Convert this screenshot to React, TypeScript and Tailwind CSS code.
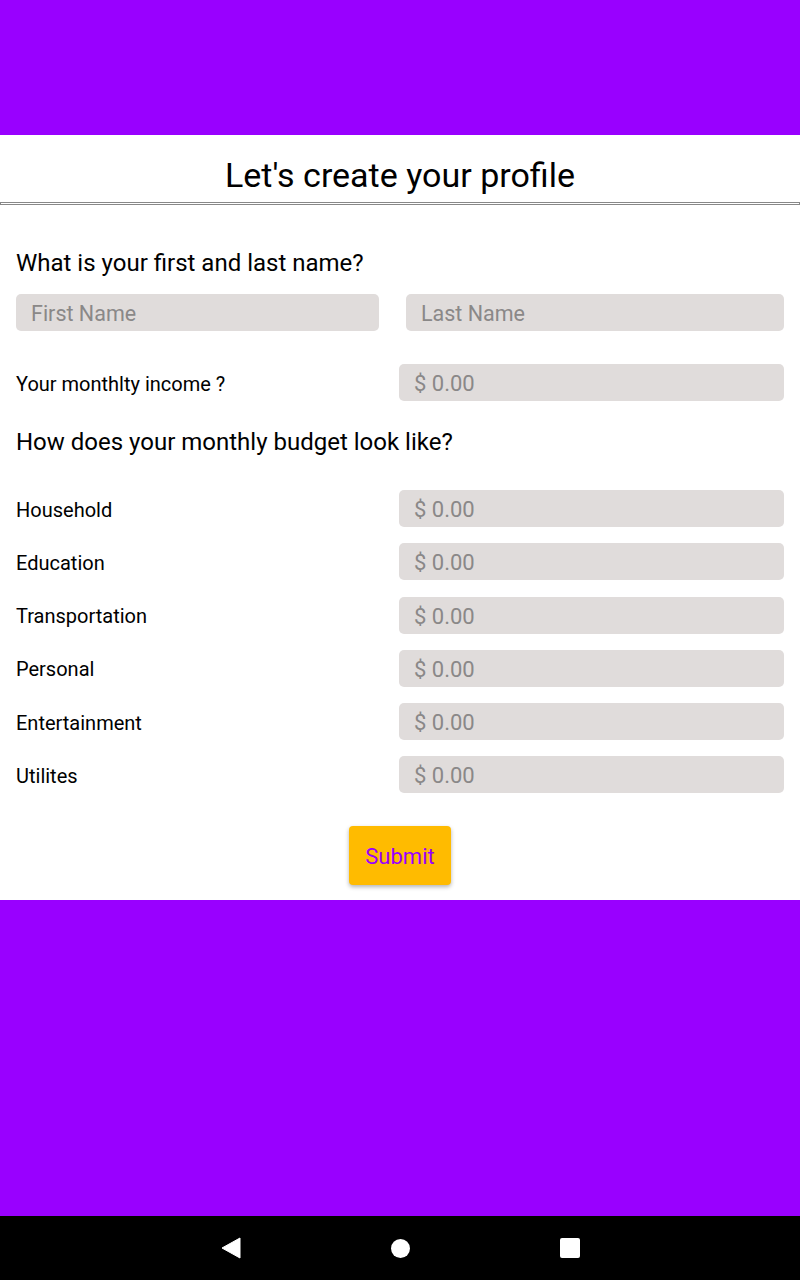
const rows = ["Household", "Education", "Transportation", "Personal", "Entertainment", "Utilites"];

const MoneyInput = () => (
  <input
    placeholder="$ 0.00"
    className="w-[385px] h-[37px] rounded-[5px] bg-[#e0dcdb] pl-[15px] pt-[2px] text-[22px] text-[#222] placeholder:text-[#8a8888] outline-none"
  />
);

export default function App() {
  return (
    <div className="w-[800px] h-[1280px] flex flex-col font-['Roboto',sans-serif] text-black">
      <div className="h-[135px] bg-[#9900ff]" />

      <div className="h-[765px] bg-white flex flex-col">
        <h1 className="h-[67px] pt-[18px] text-center text-[34px] leading-[44px]">Let's create your profile</h1>
        <div className="h-[3px] border border-[#888]" />

        <div className="px-4 pt-[43px]">
          <p className="text-[24px] leading-[30px]">What is your first and last name?</p>
          <div className="flex justify-between mt-[16px]">
            <input
              placeholder="First Name"
              className="w-[363px] h-[37px] rounded-[5px] bg-[#e0dcdb] pl-[15px] pt-[2px] text-[21.5px] placeholder:text-[#8a8888] outline-none"
            />
            <input
              placeholder="Last Name"
              className="w-[378px] h-[37px] rounded-[5px] bg-[#e0dcdb] pl-[15px] pt-[2px] text-[21.5px] placeholder:text-[#8a8888] outline-none"
            />
          </div>

          <div className="flex items-center justify-between mt-[33px]">
            <span className="text-[20px] pt-[2px]">Your monthlty income ?</span>
            <MoneyInput />
          </div>

          <p className="text-[24px] leading-[30px] mt-[26px]">How does your monthly budget look like?</p>

          <div className="flex flex-col gap-[16.3px] mt-[33px]">
            {rows.map((r) => (
              <div key={r} className="flex items-center justify-between">
                <span className="text-[20px] pt-[2px]">{r}</span>
                <MoneyInput />
              </div>
            ))}
          </div>

          <div className="flex justify-center mt-[33px]">
            <button className="w-[102px] h-[59px] rounded-[4px] bg-[#ffbb00] text-[#9900ff] text-[22px] pt-[2px] shadow-[0_2px_4px_rgba(0,0,0,0.3)]">
              Submit
            </button>
          </div>
        </div>
      </div>

      <div className="flex-1 bg-[#9900ff]" />

      <div className="h-[64px] bg-black flex items-center justify-center gap-[150px]">
        <svg width="20" height="22" viewBox="0 0 20 22">
          <path d="M19 1 L1 11 L19 21 Z" fill="white" stroke="white" strokeLinejoin="round" strokeWidth="1" />
        </svg>
        <div className="w-[19px] h-[19px] rounded-full bg-white" />
        <div className="w-[20px] h-[20px] rounded-[2px] bg-white" />
      </div>
    </div>
  );
}
